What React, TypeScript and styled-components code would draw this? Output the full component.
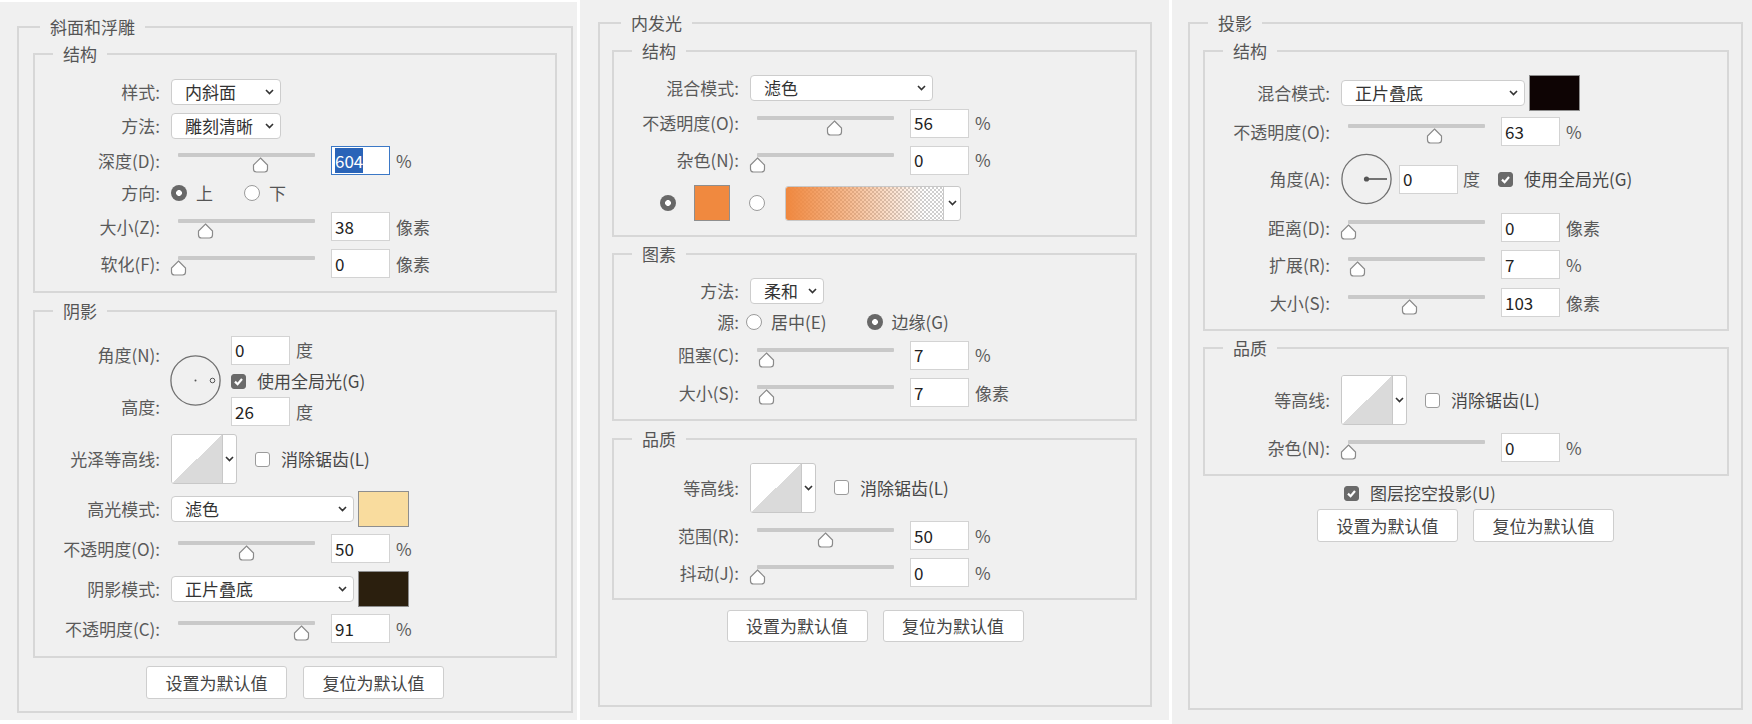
import React from "react";
import styled, { createGlobalStyle } from "styled-components";

const GlobalStyle = createGlobalStyle`
  html, body {
    margin: 0;
    padding: 0;
    background: #ffffff;
  }
  body {
    font-family: "Noto Sans CJK SC", "Noto Sans", "Liberation Sans", sans-serif;
    font-size: 17px;
    color: #555;
  }
`;

const Page = styled.div`
  display: flex;
  align-items: flex-start;
  gap: 3px;
  width: 1752px;
  height: 724px;
  overflow: hidden;
`;

const Panel = styled.section<{ $w: number; $top: number; $h: number; $pad: string }>`
  box-sizing: border-box;
  display: flex;
  flex-direction: column;
  flex: none;
  width: ${(p) => p.$w}px;
  height: ${(p) => p.$h}px;
  margin-top: ${(p) => p.$top}px;
  padding: ${(p) => p.$pad};
  background: #f0f0f0;
`;

const OuterGroup = styled.div<{ $w: number }>`
  box-sizing: border-box;
  display: flex;
  flex-direction: column;
  flex: 1;
  width: ${(p) => p.$w}px;
  border: 2px solid #d7d7d7;
`;

const InnerGroup = styled.div<{ $mt: number; $ml: number; $mr: number; $pb: number }>`
  margin: ${(p) => `${p.$mt}px ${p.$mr}px 0 ${p.$ml}px`};
  padding-bottom: ${(p) => p.$pb}px;
  border: 2px solid #d7d7d7;
`;

const Title = styled.div<{ $indent?: number; $mb?: number }>`
  width: fit-content;
  margin: -11px 0 ${(p) => p.$mb ?? 0}px ${(p) => p.$indent ?? 18}px;
  padding: 0 10px;
  background: #f0f0f0;
  line-height: 20px;
  color: #555;
`;

const Row = styled.div<{ $h: number }>`
  display: grid;
  grid-template-columns: 125px auto;
  column-gap: 11px;
  align-items: center;
  height: ${(p) => p.$h}px;
`;

const Label = styled.span`
  text-align: right;
  white-space: nowrap;
  line-height: 20px;
  color: #5a5a5a;
`;

const Controls = styled.div`
  display: flex;
  align-items: center;
`;

// slider
const SliderBox = styled.div`
  position: relative;
  flex: none;
  box-sizing: border-box;
  width: 160px;
  height: 29px;
  padding: 7px 16px 0 7px;
`;

const Track = styled.div`
  height: 4px;
  background: #c9c9c9;
  border-radius: 1px;
`;

const Thumb = styled.svg`
  position: absolute;
  top: 11px;
  width: 17px;
  height: 16px;
`;

const Field = styled.div<{ $focus?: boolean; $ml?: number }>`
  box-sizing: border-box;
  display: flex;
  align-items: center;
  flex: none;
  width: 59px;
  height: 29px;
  margin-left: ${(p) => p.$ml ?? 0}px;
  padding: 0 3px;
  background: #fff;
  border: 1px solid ${(p) => (p.$focus ? "#3b78c6" : "#d3d3d3")};
  color: #222;
  line-height: 20px;
`;

const Highlight = styled.span`
  background: #2a64b8;
  color: #fff;
  line-height: 25px;
`;

const Unit = styled.span<{ $ml?: number }>`
  margin-left: ${(p) => p.$ml ?? 6}px;
  line-height: 20px;
  color: #5a5a5a;
`;

// select
const SelectBox = styled.div<{ $w: number }>`
  box-sizing: border-box;
  display: flex;
  align-items: center;
  justify-content: space-between;
  flex: none;
  width: ${(p) => p.$w}px;
  height: 26px;
  padding: 0 6px 0 13px;
  background: #fff;
  border: 1px solid #cdcdcd;
  border-radius: 4px;
  color: #333;
  line-height: 20px;
`;

const Swatch = styled.div<{ $w: number; $color: string; $ml?: number }>`
  box-sizing: border-box;
  flex: none;
  width: ${(p) => p.$w}px;
  height: 36px;
  margin-left: ${(p) => p.$ml ?? 4}px;
  background: ${(p) => p.$color};
  border: 1px solid #8e8e8e;
`;

const Radio = styled.span<{ $on?: boolean; $ml?: number }>`
  box-sizing: border-box;
  flex: none;
  width: 16px;
  height: 16px;
  margin-left: ${(p) => p.$ml ?? 0}px;
  border-radius: 50%;
  ${(p) =>
    p.$on
      ? "background: radial-gradient(circle, #fff 0 2.6px, #686868 3.2px);"
      : "background: #fff; border: 1px solid #9b9b9b;"}
`;

const RadioGroup = styled.div<{ $gap: number; $ml?: number }>`
  display: flex;
  align-items: center;
  gap: ${(p) => p.$gap}px;
  margin-left: ${(p) => p.$ml ?? 0}px;
`;

const RadioItem = styled.span`
  display: flex;
  align-items: center;
  gap: 9px;
  line-height: 20px;
  color: #555;
`;

const CheckBox = styled.span<{ $on?: boolean }>`
  box-sizing: border-box;
  display: inline-flex;
  align-items: center;
  justify-content: center;
  flex: none;
  width: 15px;
  height: 15px;
  border-radius: 3px;
  background: ${(p) => (p.$on ? "#6a6a6a" : "#fff")};
  border: 1px solid ${(p) => (p.$on ? "#6a6a6a" : "#9b9b9b")};
`;

const CheckLabel = styled.span<{ $ml?: number }>`
  display: flex;
  align-items: center;
  gap: 11px;
  margin-left: ${(p) => p.$ml ?? 0}px;
  line-height: 20px;
  color: #474747;
  white-space: nowrap;
`;

// contour picker
const Contour = styled.div`
  box-sizing: border-box;
  display: flex;
  flex: none;
  width: 66px;
  height: 50px;
  background: #fff;
  border: 1px solid #c8c8c8;
  border-radius: 3px;
  overflow: hidden;
`;

const ContourPlot = styled.div`
  width: 50px;
  height: 100%;
  background: linear-gradient(to top left, #dadada 50%, #ffffff 50%);
  border-right: 1px solid #c8c8c8;
`;

const DropPart = styled.div`
  display: flex;
  flex: 1;
  align-items: center;
  justify-content: center;
`;

// gradient picker
const GradientPick = styled.div<{ $ml: number }>`
  box-sizing: border-box;
  display: flex;
  flex: none;
  width: 176px;
  height: 35px;
  margin-left: ${(p) => p.$ml}px;
  background: #fff;
  border: 1px solid #c8c8c8;
  border-radius: 3px;
  overflow: hidden;
`;

const GradientFill = styled.div`
  width: 157px;
  background: linear-gradient(
      to right,
      rgba(240, 136, 63, 1) 0%,
      rgba(240, 136, 63, 0.6) 38%,
      rgba(240, 136, 63, 0) 88%
    ),
    repeating-conic-gradient(#cfcfcf 0 25%, #ffffff 0 50%) 0 0 / 4px 4px;
  border-right: 1px solid #c8c8c8;
`;

const ColorRow = styled.div`
  display: flex;
  align-items: center;
  height: 48px;
  padding-left: 46px;
`;

// angle block (bevel shading)
const AngleGrid = styled.div`
  display: grid;
  grid-template-columns: 125px 51px auto;
  grid-template-rows: 30px 32px 29px;
  column-gap: 10px;
  margin-bottom: 3px;
`;

const GridLabel = styled(Label)<{ $row: number; $align: string }>`
  grid-column: 1;
  grid-row: ${(p) => p.$row};
  align-self: ${(p) => p.$align};
`;

const DialCell = styled.div`
  grid-column: 2;
  grid-row: 1 / 4;
  align-self: center;
  display: flex;
`;

const GridControls = styled(Controls)<{ $row: number }>`
  grid-column: 3;
  grid-row: ${(p) => p.$row};
`;

const KnockoutRow = styled.div`
  display: flex;
  align-items: center;
  height: 26px;
  margin-top: 4px;
  padding-left: 154px;
`;

const ButtonBar = styled.div<{ $mt: number; $gap: number }>`
  display: flex;
  justify-content: center;
  gap: ${(p) => p.$gap}px;
  margin-top: ${(p) => p.$mt}px;
`;

const PlainButton = styled.button<{ $h: number }>`
  box-sizing: border-box;
  width: 141px;
  height: ${(p) => p.$h}px;
  padding: 0;
  background: #fff;
  border: 1px solid #cecece;
  border-radius: 3px;
  font-family: inherit;
  font-size: 17px;
  line-height: 20px;
  color: #444;
`;

const Chevron = () => (
  <svg width="9" height="6" viewBox="0 0 9 6">
    <polyline points="1,1 4.5,4.6 8,1" fill="none" stroke="#333" strokeWidth="1.6" />
  </svg>
);

const Tick = () => (
  <svg width="11" height="11" viewBox="0 0 11 11">
    <polyline points="2,5.6 4.6,8.2 9,3" fill="none" stroke="#fff" strokeWidth="2.2" />
  </svg>
);

function Slider({ frac }: { frac: number }) {
  return (
    <SliderBox>
      <Track />
      <Thumb viewBox="0 0 17 16" style={{ left: 7 + frac * 137 - 8.5 }}>
        <path
          d="M8.5 1 L15.5 8 V12 Q15.5 15 12.5 15 H4.5 Q1.5 15 1.5 12 V8 Z"
          fill="#fff"
          stroke="#8a8a8a"
          strokeWidth="1.2"
        />
      </Thumb>
    </SliderBox>
  );
}

interface SliderRowProps {
  h: number;
  label: string;
  frac: number;
  value: string;
  unit: string;
  focus?: boolean;
}

const SliderRow = ({ h, label, frac, value, unit, focus }: SliderRowProps) => (
  <Row $h={h}>
    <Label>{label}</Label>
    <Controls>
      <Slider frac={frac} />
      <Field $focus={focus}>{focus ? <Highlight>{value}</Highlight> : value}</Field>
      <Unit>{unit}</Unit>
    </Controls>
  </Row>
);

interface SelectRowProps {
  h: number;
  label: string;
  w: number;
  value: string;
  swatch?: string;
}

const SelectRow = ({ h, label, w, value, swatch }: SelectRowProps) => (
  <Row $h={h}>
    <Label>{label}</Label>
    <Controls>
      <SelectBox $w={w}>
        <span>{value}</span>
        <Chevron />
      </SelectBox>
      {swatch && <Swatch $w={51} $color={swatch} />}
    </Controls>
  </Row>
);

const ContourRow = ({ h, label }: { h: number; label: string }) => (
  <Row $h={h}>
    <Label>{label}</Label>
    <Controls>
      <Contour>
        <ContourPlot />
        <DropPart>
          <Chevron />
        </DropPart>
      </Contour>
      <CheckLabel $ml={18}>
        <CheckBox />
        消除锯齿(L)
      </CheckLabel>
    </Controls>
  </Row>
);

const Buttons = ({ mt, gap, h = 33 }: { mt: number; gap: number; h?: number }) => (
  <ButtonBar $mt={mt} $gap={gap}>
    <PlainButton $h={h}>设置为默认值</PlainButton>
    <PlainButton $h={h}>复位为默认值</PlainButton>
  </ButtonBar>
);

const DotDial = () => (
  <svg width="51" height="51" viewBox="0 0 51 51">
    <circle cx="25.5" cy="25.5" r="24.6" fill="none" stroke="#707070" strokeWidth="1.3" />
    <circle cx="25.5" cy="25.5" r="1" fill="#555" />
    <circle cx="42.5" cy="25.5" r="2.3" fill="none" stroke="#555" strokeWidth="1" />
  </svg>
);

const LineDial = () => (
  <svg width="51" height="52" viewBox="0 0 51 52">
    <circle cx="25.5" cy="26" r="24.6" fill="none" stroke="#707070" strokeWidth="1.3" />
    <circle cx="25.5" cy="26" r="2.6" fill="#555" />
    <line x1="25.5" y1="26" x2="46" y2="26" stroke="#555" strokeWidth="1.6" />
  </svg>
);

function BevelPanel() {
  return (
    <Panel $w={577} $top={2} $h={718} $pad="24px 0 7px 17px">
      <OuterGroup $w={556}>
        <Title $indent={21}>斜面和浮雕</Title>
        <InnerGroup $mt={16} $ml={14} $mr={14} $pb={10}>
          <Title $mb={11}>结构</Title>
          <SelectRow h={34} label="样式:" w={110} value="内斜面" />
          <SelectRow h={33} label="方法:" w={110} value="雕刻清晰" />
          <SliderRow h={37} label="深度(D):" frac={0.6} value="604" unit="%" focus />
          <Row $h={28}>
            <Label>方向:</Label>
            <RadioGroup $gap={31}>
              <RadioItem>
                <Radio $on />上
              </RadioItem>
              <RadioItem>
                <Radio />下
              </RadioItem>
            </RadioGroup>
          </Row>
          <SliderRow h={39} label="大小(Z):" frac={0.2} value="38" unit="像素" />
          <SliderRow h={35} label="软化(F):" frac={0} value="0" unit="像素" />
        </InnerGroup>
        <InnerGroup $mt={17} $ml={14} $mr={14} $pb={9}>
          <Title $mb={14}>阴影</Title>
          <AngleGrid>
            <GridLabel $row={1} $align="end">角度(N):</GridLabel>
            <GridLabel $row={3} $align="start">高度:</GridLabel>
            <DialCell>
              <DotDial />
            </DialCell>
            <GridControls $row={1}>
              <Field>0</Field>
              <Unit>度</Unit>
            </GridControls>
            <GridControls $row={2}>
              <CheckLabel>
                <CheckBox $on>
                  <Tick />
                </CheckBox>
                使用全局光(G)
              </CheckLabel>
            </GridControls>
            <GridControls $row={3}>
              <Field>26</Field>
              <Unit>度</Unit>
            </GridControls>
          </AngleGrid>
          <ContourRow h={60} label="光泽等高线:" />
          <SelectRow h={40} label="高光模式:" w={183} value="滤色" swatch="#f9dc9e" />
          <SliderRow h={39} label="不透明度(O):" frac={0.5} value="50" unit="%" />
          <SelectRow h={42} label="阴影模式:" w={183} value="正片叠底" swatch="#2b1f0e" />
          <SliderRow h={37} label="不透明度(C):" frac={0.905} value="91" unit="%" />
        </InnerGroup>
        <Buttons mt={8} gap={16} />
      </OuterGroup>
    </Panel>
  );
}

function InnerGlowPanel() {
  return (
    <Panel $w={589} $top={0} $h={720} $pad="22px 0 13px 18px">
      <OuterGroup $w={554}>
        <Title $indent={21}>内发光</Title>
        <InnerGroup $mt={17} $ml={12} $mr={13} $pb={8}>
          <Title $mb={10}>结构</Title>
          <SelectRow h={34} label="混合模式:" w={183} value="滤色" />
          <SliderRow h={36} label="不透明度(O):" frac={0.566} value="56" unit="%" />
          <SliderRow h={38} label="杂色(N):" frac={0} value="0" unit="%" />
          <ColorRow>
            <Radio $on />
            <Swatch $w={36} $color="#f0893f" $ml={18} />
            <Radio $ml={19} />
            <GradientPick $ml={20}>
              <GradientFill />
              <DropPart>
                <Chevron />
              </DropPart>
            </GradientPick>
          </ColorRow>
        </InnerGroup>
        <InnerGroup $mt={16} $ml={12} $mr={13} $pb={8}>
          <Title $mb={10}>图素</Title>
          <SelectRow h={34} label="方法:" w={74} value="柔和" />
          <Row $h={28}>
            <Label>源:</Label>
            <RadioGroup $gap={40} $ml={-4}>
              <RadioItem>
                <Radio />
                居中(E)
              </RadioItem>
              <RadioItem>
                <Radio $on />
                边缘(G)
              </RadioItem>
            </RadioGroup>
          </Row>
          <SliderRow h={38} label="阻塞(C):" frac={0.066} value="7" unit="%" />
          <SliderRow h={37} label="大小(S):" frac={0.066} value="7" unit="像素" />
        </InnerGroup>
        <InnerGroup $mt={17} $ml={12} $mr={13} $pb={8}>
          <Title $mb={10}>品质</Title>
          <ContourRow h={57} label="等高线:" />
          <SliderRow h={39} label="范围(R):" frac={0.5} value="50" unit="%" />
          <SliderRow h={35} label="抖动(J):" frac={0} value="0" unit="%" />
        </InnerGroup>
        <Buttons mt={10} gap={15} h={32} />
      </OuterGroup>
    </Panel>
  );
}

function DropShadowPanel() {
  return (
    <Panel $w={580} $top={0} $h={724} $pad="22px 0 14px 16px">
      <OuterGroup $w={555}>
        <Title>投影</Title>
        <InnerGroup $mt={17} $ml={13} $mr={12} $pb={4}>
          <Title $mb={13}>结构</Title>
          <SelectRow h={37} label="混合模式:" w={184} value="正片叠底" swatch="#0e0404" />
          <SliderRow h={41} label="不透明度(O):" frac={0.63} value="63" unit="%" />
          <Row $h={54}>
            <Label>角度(A):</Label>
            <Controls>
              <LineDial />
              <Field $ml={7}>0</Field>
              <Unit $ml={5}>度</Unit>
              <CheckLabel $ml={18}>
                <CheckBox $on>
                  <Tick />
                </CheckBox>
                使用全局光(G)
              </CheckLabel>
            </Controls>
          </Row>
          <SliderRow h={43} label="距离(D):" frac={0} value="0" unit="像素" />
          <SliderRow h={31} label="扩展(R):" frac={0.066} value="7" unit="%" />
          <SliderRow h={45} label="大小(S):" frac={0.45} value="103" unit="像素" />
        </InnerGroup>
        <InnerGroup $mt={16} $ml={13} $mr={12} $pb={6}>
          <Title $mb={15}>品质</Title>
          <ContourRow h={54} label="等高线:" />
          <SliderRow h={41} label="杂色(N):" frac={0} value="0" unit="%" />
        </InnerGroup>
        <KnockoutRow>
          <CheckLabel>
            <CheckBox $on>
              <Tick />
            </CheckBox>
            图层挖空投影(U)
          </CheckLabel>
        </KnockoutRow>
        <Buttons mt={3} gap={15} />
      </OuterGroup>
    </Panel>
  );
}

export default function App() {
  return (
    <>
      <GlobalStyle />
      <Page>
        <BevelPanel />
        <InnerGlowPanel />
        <DropShadowPanel />
      </Page>
    </>
  );
}
